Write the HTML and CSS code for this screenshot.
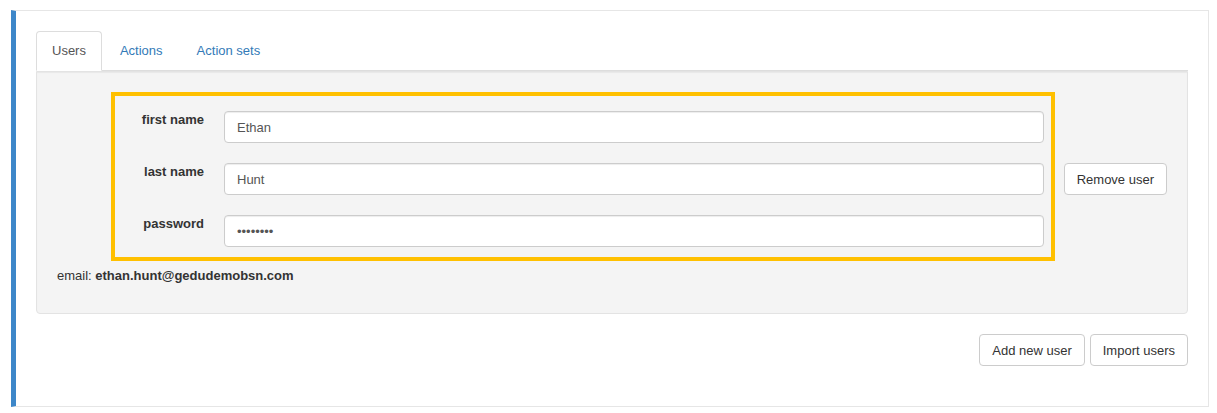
FILE: index.html
```html
<!DOCTYPE html>
<html lang="en">
<head>
<meta charset="utf-8">
<title>Users</title>
<link rel="stylesheet" href="styles.css">
</head>
<body>
<div class="panel">
  <ul class="tabs">
    <li class="tab active"><span>Users</span></li>
    <li class="tab"><a href="#">Actions</a></li>
    <li class="tab"><a href="#">Action sets</a></li>
  </ul>
  <div class="well">
    <div class="user-row">
      <div class="highlight">
        <label class="label" for="fn">first name</label>
        <input class="input" id="fn" type="text" value="Ethan">
        <label class="label" for="ln">last name</label>
        <input class="input" id="ln" type="text" value="Hunt">
        <label class="label" for="pw">password</label>
        <input class="input" id="pw" type="password" value="password">
      </div>
      <button class="btn remove">Remove user</button>
    </div>
    <p class="email">email: <b>ethan.hunt@gedudemobsn.com</b></p>
  </div>
  <div class="actions">
    <button class="btn">Add new user</button>
    <button class="btn">Import users</button>
  </div>
</div>
</body>
</html>
```
FILE: styles.css
```css
* { box-sizing: border-box; }
html, body { margin: 0; background: #fff; }
body {
  font-family: "Liberation Sans", Arial, sans-serif;
  font-size: 13px;
  line-height: 18px;
  color: #333;
  padding: 10px 8px 0 11px;
}
.panel {
  border: 1px solid #e6e6e6;
  border-left: 5px solid #3d87c9;
  padding: 20px;
}
.tabs {
  list-style: none;
  margin: 0;
  padding: 0;
  display: flex;
  border-bottom: 1px solid #ddd;
}
.tab {
  margin: 0 2px -1px 0;
  padding: 10px 15px;
  border: 1px solid transparent;
  border-radius: 4px 4px 0 0;
}
.tab a { color: #337ab7; text-decoration: none; }
.tab.active {
  background: #fff;
  border-color: #ddd #ddd transparent;
  color: #555;
}
.well {
  background: #f4f4f4;
  border: 1px solid #e3e3e3;
  border-radius: 0 0 4px 4px;
  box-shadow: inset 0 1px 1px rgba(0,0,0,0.05);
  padding: 20px 20px 28px 20px;
}
.user-row {
  display: flex;
  gap: 9px;
  margin-left: 54px;
}
.highlight {
  flex: 1;
  border: 4px solid #ffc000;
  padding: 15px 7px 10px 0;
  display: grid;
  grid-template-columns: 89px 1fr;
  column-gap: 20px;
  row-gap: 20px;
}
.label {
  font-weight: bold;
  text-align: right;
  line-height: 18px;
}
.input {
  height: 32px;
  border: 1px solid #ccc;
  border-radius: 4px;
  background: #fff;
  padding: 0 12px;
  font-family: inherit;
  font-size: 13px;
  color: #555;
  box-shadow: inset 0 1px 1px rgba(0,0,0,0.075);
}
.btn {
  height: 32px;
  padding: 0 12px;
  border: 1px solid #ccc;
  border-radius: 4px;
  background: #fff;
  font-family: inherit;
  font-size: 13px;
  color: #333;
}
.remove {
  align-self: center;
  margin-top: 5px;
}
.email {
  margin: 6px 0 0 0;
}
.actions {
  display: flex;
  justify-content: flex-end;
  gap: 5px;
  margin: 20px 0 20px;
}
```
